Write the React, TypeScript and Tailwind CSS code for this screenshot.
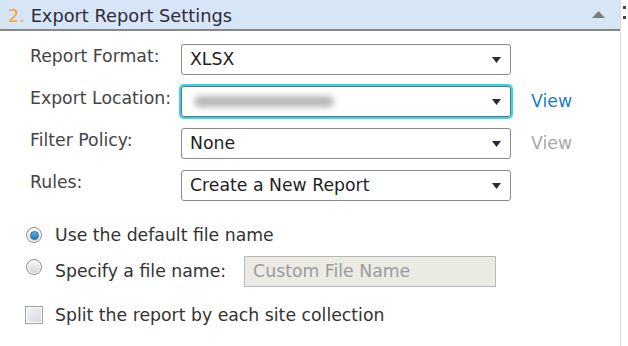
import React from 'react';

const font = { fontFamily: '"DejaVu Sans", Verdana, sans-serif' };

interface SelectRowProps {
  label: string;
  value?: string;
  blurred?: boolean;
  focused?: boolean;
  view?: 'active' | 'disabled';
}

const Caret = () => (
  <svg width="9" height="6" viewBox="0 0 9 6" className="shrink-0">
    <path d="M0 0h9L4.5 6z" fill="#262b3f" />
  </svg>
);

const SelectRow: React.FC<SelectRowProps> = ({ label, value, blurred, focused, view }) => {
  return (
    <div className="flex items-center h-[31px]">
      <div className="w-[151px] text-[17.3px] leading-none text-[#444] -mt-[5px]">{label}</div>
      <div
        className={
          focused
            ? 'w-[330px] h-[31px] rounded-[3px] border border-[#6d6d6d] flex items-center justify-between pl-[8px] pr-[9px] shadow-[0_0_0_2px_#2fd8f2]'
            : 'w-[330px] h-[31px] rounded-[3px] border border-[#8a8a8a] flex items-center justify-between pl-[8px] pr-[9px]'
        }
      >
        {blurred ? (
          <span className="h-[11px] w-[140px] ml-[4px] rounded-full bg-[#b5b5b5] blur-[3px]" />
        ) : (
          <span className="text-[17.3px] leading-none text-[#1e1e1e]">{value}</span>
        )}
        <Caret />
      </div>
      {view && (
        <span
          className={
            view === 'active'
              ? 'ml-[20px] text-[17.3px] leading-none text-[#1a7fc4]'
              : 'ml-[20px] text-[17.3px] leading-none text-[#a8a8a8]'
          }
        >
          View
        </span>
      )}
    </div>
  );
};

const Radio: React.FC<{ checked?: boolean }> = ({ checked }) => (
  <span className="w-[16px] h-[16px] rounded-full border border-[#8f8f8f] bg-gradient-to-b from-[#fbfbfb] to-[#d2d2d2] flex items-center justify-center shrink-0 shadow-[inset_0_0_0_1px_#fff]">
    {checked && (
      <span className="w-[9px] h-[9px] rounded-full bg-gradient-to-b from-[#5fb6ea] to-[#1f6fb5] border border-[#2a6ea8]" />
    )}
  </span>
);

export default function App() {
  return (
    <div className="w-[628px] h-[346px] bg-white flex overflow-hidden" style={font}>
      <div className="w-[621px] border-r border-[#dcdcdc] flex flex-col">
        <div className="h-[31px] bg-[#d7e6f6] border-b-[2px] border-[#878787] flex items-center justify-between pl-[8px] pr-[15px]">
          <span className="text-[17.8px] leading-none text-[#2d2d38] mt-[3px]">
            <span className="text-[#f6a43d]">2. </span>Export Report Settings
          </span>
          <svg width="13" height="7" viewBox="0 0 13 7">
            <path d="M6.5 0L13 7H0z" fill="#7d7d7d" />
          </svg>
        </div>
        <div className="flex flex-col gap-[11px] pt-[13px] pl-[30px]">
          <SelectRow label="Report Format:" value="XLSX" />
          <SelectRow label="Export Location:" blurred focused view="active" />
          <SelectRow label="Filter Policy:" value="None" view="disabled" />
          <SelectRow label="Rules:" value="Create a New Report" />
        </div>
        <div className="flex flex-col pl-[26px] pt-[24px]">
          <div className="flex items-center h-[20px]">
            <Radio checked />
            <span className="ml-[13px] text-[17.3px] leading-none text-[#333] mt-[1px]">Use the default file name</span>
          </div>
          <div className="flex items-center h-[31px] mt-[11px]">
            <span className="-mt-[10px]">
              <Radio />
            </span>
            <span className="ml-[13px] text-[17.3px] leading-none text-[#333]">Specify a file name:</span>
            <div className="ml-[18px] w-[252px] h-[31px] bg-[#ebebe4] border border-[#b9b9b9] flex items-center pl-[8px] text-[17.3px] leading-none text-[#9b9b9b]">
              Custom File Name
            </div>
          </div>
          <div className="flex items-center h-[20px] mt-[18px]">
            <span className="w-[18px] h-[18px] -ml-[1px] border border-[#a0a0a0] bg-gradient-to-br from-[#f4f6f8] to-[#d3d8de] shrink-0 shadow-[inset_0_0_0_1px_#fff]" />
            <span className="ml-[12px] text-[17.3px] leading-none text-[#333] mt-[1px]">Split the report by each site collection</span>
          </div>
        </div>
      </div>
      <div className="flex-1 flex flex-col items-start pl-[2px] pt-[6px] gap-[7px]">
        <span className="w-[3px] h-[3px] bg-[#444]" />
        <span className="w-[3px] h-[3px] bg-[#444]" />
      </div>
    </div>
  );
}
